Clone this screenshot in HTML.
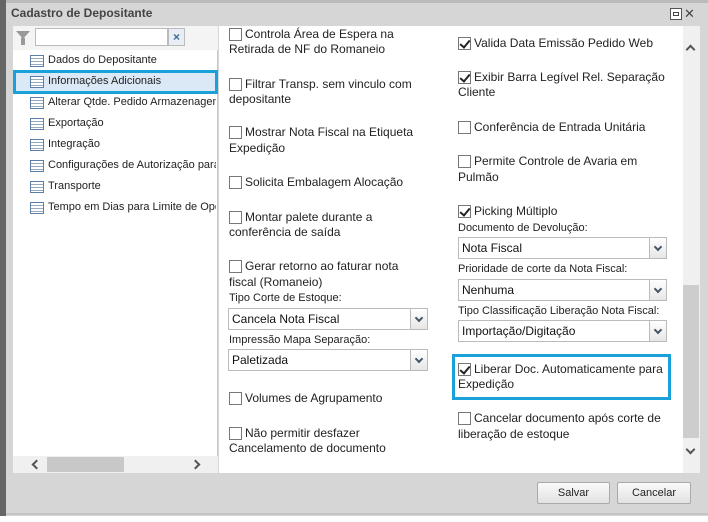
<!DOCTYPE html>
<html><head><meta charset="utf-8"><style>
*{margin:0;padding:0;box-sizing:border-box}
body{width:708px;height:522px;overflow:hidden;background:#fff;font-family:"Liberation Sans","DejaVu Sans",sans-serif;position:relative}
.a{position:absolute}
.t{position:absolute;font-size:12px;color:#222;line-height:15px;white-space:nowrap}
.cb{position:absolute;width:13px;height:13px;border:1px solid #777;background:#fff}
.cb.c::after{content:"";position:absolute;left:3px;top:0px;width:4px;height:8px;border:solid #222;border-width:0 2px 2px 0;transform:rotate(40deg)}
.lbl{position:absolute;font-size:11px;color:#222;white-space:nowrap}
.sel{position:absolute;height:22px;border:1px solid #bbb;background:#fff;font-size:12px;line-height:20px;padding-left:3px;color:#111}
.sel .ar{position:absolute;right:-1px;top:-1px;width:18px;height:22px;border:1px solid #bbb;background:linear-gradient(#fff,#e6e6e6)}
.sel .ar::after{content:"";position:absolute;left:5px;top:6px;width:4px;height:4px;border:solid #456;border-width:0 2px 2px 0;transform:rotate(45deg)}
.ti{position:absolute;left:30px;width:14px;height:12px;border:1px solid #5b7fa8;background:repeating-linear-gradient(#fff 0 2px,#9ab 2px 3px)}
.tl{position:absolute;left:48px;font-size:11px;color:#222;white-space:nowrap}
.chev{position:absolute;width:7px;height:7px;border:solid #555;border-width:0 2px 2px 0}
</style></head><body>
<div class="a" style="left:0;top:0;width:708px;height:516px;background:#d6d6d6"></div>
<div class="a" style="left:0;top:0;width:6px;height:516px;background:#666"></div>
<div class="a" style="left:6px;top:0;width:702px;height:3px;background:#bbb"></div>
<div class="a" style="left:11px;top:6px;font-size:12px;font-weight:bold;color:#444">Cadastro de Depositante</div>
<div class="a" style="left:670px;top:8px;width:12px;height:12px;border:1px solid #555;background:#fff"><div style="margin:3px 2px;height:4px;border:1px solid #444"></div></div>
<div class="a" style="left:684px;top:6px;font-size:13px;color:#444">✕</div>
<!-- left panel -->
<div class="a" style="left:13px;top:26px;width:205px;height:447px;background:#fff;border-right:1px solid #b6cfe0"></div>
<div class="a" style="left:13px;top:26px;width:205px;height:24px;background:#f4f4f4"></div>
<div class="a" style="left:16px;top:31px;width:0;height:0;border-left:7px solid transparent;border-right:7px solid transparent;border-top:8px solid #999"></div>
<div class="a" style="left:21px;top:38px;width:4px;height:7px;background:#999"></div>
<div class="a" style="left:35px;top:28px;width:133px;height:18px;border:1px solid #bbb;background:#fff"></div>
<div class="a" style="left:168px;top:28px;width:17px;height:18px;border:1px solid #bbb;background:#e8eef4;color:#3a6a9a;font-size:12px;text-align:center;line-height:16px;font-weight:bold">×</div>
<div class="a" style="left:13px;top:70px;width:205px;height:24px;background:#dbe8f6;border:3px solid #1ba1d9"></div>
<div class="ti" style="top:55px"></div><div class="tl" style="top:54px">Dados do Depositante</div>
<div class="ti" style="top:76px"></div><div class="tl" style="top:75px">Informações Adicionais</div>
<div class="ti" style="top:97px"></div><div class="tl" style="top:96px;width:168px;overflow:hidden">Alterar Qtde. Pedido Armazenagem</div>
<div class="ti" style="top:118px"></div><div class="tl" style="top:117px">Exportação</div>
<div class="ti" style="top:139px"></div><div class="tl" style="top:138px">Integração</div>
<div class="ti" style="top:160px"></div><div class="tl" style="top:159px;width:168px;overflow:hidden">Configurações de Autorização para</div>
<div class="ti" style="top:181px"></div><div class="tl" style="top:180px">Transporte</div>
<div class="ti" style="top:202px"></div><div class="tl" style="top:201px;width:168px;overflow:hidden">Tempo em Dias para Limite de Operação</div>
<div class="a" style="left:13px;top:456px;width:205px;height:17px;background:#f0f0f0"></div>
<div class="a" style="left:47px;top:457px;width:77px;height:15px;background:#c8c8c8"></div>
<div class="chev" style="left:33px;top:461px;transform:rotate(135deg)"></div>
<div class="chev" style="left:192px;top:461px;transform:rotate(-45deg)"></div>
<!-- content -->
<div class="a" style="left:219px;top:26px;width:464px;height:447px;background:#fff"></div>
<div class="a" style="left:683px;top:26px;width:17px;height:447px;background:#f0f0f0"></div>
<div class="a" style="left:683px;top:285px;width:16px;height:153px;background:#cdcdcd"></div>
<div class="chev" style="left:687px;top:46px;transform:rotate(-135deg)"></div>
<div class="chev" style="left:687px;top:446px;transform:rotate(45deg)"></div>

<div class="cb" style="left:229px;top:28px"></div><div class="t" style="left:245px;top:27px">Controla Área de Espera na</div><div class="t" style="left:229px;top:42px">Retirada de NF do Romaneio</div>
<div class="cb" style="left:229px;top:78px"></div><div class="t" style="left:245px;top:77px">Filtrar Transp. sem vinculo com</div><div class="t" style="left:229px;top:92px">depositante</div>
<div class="cb" style="left:229px;top:126px"></div><div class="t" style="left:245px;top:125px">Mostrar Nota Fiscal na Etiqueta</div><div class="t" style="left:229px;top:141px">Expedição</div>
<div class="cb" style="left:229px;top:176px"></div><div class="t" style="left:245px;top:175px">Solicita Embalagem Alocação</div>
<div class="cb" style="left:229px;top:211px"></div><div class="t" style="left:245px;top:210px">Montar palete durante a</div><div class="t" style="left:229px;top:225px">conferência de saída</div>
<div class="cb" style="left:229px;top:260px"></div><div class="t" style="left:245px;top:259px">Gerar retorno ao faturar nota</div><div class="t" style="left:229px;top:275px">fiscal (Romaneio)</div>
<div class="lbl" style="left:229px;top:292px">Tipo Corte de Estoque:</div>
<div class="sel" style="left:228px;top:308px;width:200px">Cancela Nota Fiscal<div class="ar"></div></div>
<div class="lbl" style="left:229px;top:334px">Impressão Mapa Separação:</div>
<div class="sel" style="left:228px;top:349px;width:200px">Paletizada<div class="ar"></div></div>
<div class="cb" style="left:229px;top:392px"></div><div class="t" style="left:245px;top:391px">Volumes de Agrupamento</div>
<div class="cb" style="left:229px;top:427px"></div><div class="t" style="left:245px;top:426px">Não permitir desfazer</div><div class="t" style="left:229px;top:441px">Cancelamento de documento</div>

<div class="cb c" style="left:458px;top:37px"></div><div class="t" style="left:474px;top:36px">Valida Data Emissão Pedido Web</div>
<div class="cb c" style="left:458px;top:71px"></div><div class="t" style="left:474px;top:70px">Exibir Barra Legível Rel. Separação</div><div class="t" style="left:458px;top:85px">Cliente</div>
<div class="cb" style="left:458px;top:121px"></div><div class="t" style="left:474px;top:120px">Conferência de Entrada Unitária</div>
<div class="cb" style="left:458px;top:155px"></div><div class="t" style="left:474px;top:154px">Permite Controle de Avaria em</div><div class="t" style="left:458px;top:170px">Pulmão</div>
<div class="cb c" style="left:458px;top:205px"></div><div class="t" style="left:474px;top:204px">Picking Múltiplo</div>
<div class="lbl" style="left:458px;top:222px">Documento de Devolução:</div>
<div class="sel" style="left:458px;top:237px;width:209px">Nota Fiscal<div class="ar"></div></div>
<div class="lbl" style="left:458px;top:263px">Prioridade de corte da Nota Fiscal:</div>
<div class="sel" style="left:458px;top:279px;width:209px">Nenhuma<div class="ar"></div></div>
<div class="lbl" style="left:458px;top:305px">Tipo Classificação Liberação Nota Fiscal:</div>
<div class="sel" style="left:458px;top:320px;width:209px">Importação/Digitação<div class="ar"></div></div>
<div class="a" style="left:452px;top:354px;width:219px;height:46px;border:3px solid #1ba1d9"></div>
<div class="cb c" style="left:458px;top:363px"></div><div class="t" style="left:474px;top:362px">Liberar Doc. Automaticamente para</div><div class="t" style="left:458px;top:377px">Expedição</div>
<div class="cb" style="left:458px;top:412px"></div><div class="t" style="left:474px;top:411px">Cancelar documento após corte de</div><div class="t" style="left:458px;top:427px">liberação de estoque</div>
<!-- footer -->
<div class="a" style="left:537px;top:482px;width:73px;height:22px;border:1px solid #aaa;border-radius:2px;background:linear-gradient(#fafafa,#e2e2e2);font-size:11px;text-align:center;line-height:20px;color:#222">Salvar</div>
<div class="a" style="left:617px;top:482px;width:74px;height:22px;border:1px solid #aaa;border-radius:2px;background:linear-gradient(#fafafa,#e2e2e2);font-size:11px;text-align:center;line-height:20px;color:#222">Cancelar</div>
<div class="a" style="left:6px;top:513px;width:702px;height:2px;background:#c4c4c4"></div>
</body></html>
